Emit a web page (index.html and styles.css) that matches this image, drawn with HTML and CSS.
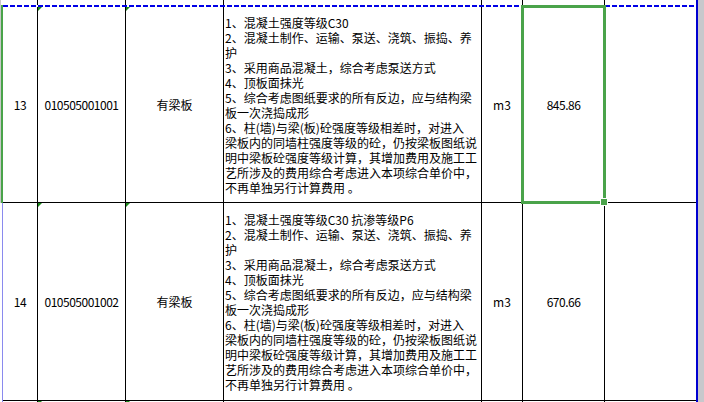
FILE: index.html
```html
<!DOCTYPE html>
<html lang="zh-CN">
<head>
<meta charset="utf-8">
<title>清单</title>
<link rel="stylesheet" href="styles.css">
</head>
<body>
<div class="sheet">
  <div class="gutter">
    <div class="gutter-top"></div>
    <div class="gutter-sel"></div>
    <div class="gutter-rest"></div>
  </div>
  <div class="grid">
    <div class="cell"></div><div class="cell"></div><div class="cell"></div><div class="cell"></div><div class="cell"></div><div class="cell"></div><div class="cell"></div>

    <div class="cell c num">13</div>
    <div class="cell c mark num">010505001001</div>
    <div class="cell c mark">有梁板</div>
    <div class="cell desc">1、混凝土强度等级C30<br>2、混凝土制作、运输、泵送、浇筑、振捣、养<br>护<br>3、采用商品混凝土，综合考虑泵送方式<br>4、顶板面抹光<br>5、综合考虑图纸要求的所有反边，应与结构梁<br>板一次浇捣成形<br>6、柱(墙)与梁(板)砼强度等级相差时，对进入<br>梁板内的同墙柱强度等级的砼，仍按梁板图纸说<br>明中梁板砼强度等级计算，其增加费用及施工工<br>艺所涉及的费用综合考虑进入本项综合单价中，<br>不再单独另行计算费用 。</div>
    <div class="cell c">m3</div>
    <div class="cell c num">845.86</div>
    <div class="cell"></div>

    <div class="cell c num">14</div>
    <div class="cell c mark num">010505001002</div>
    <div class="cell c mark">有梁板</div>
    <div class="cell desc">1、混凝土强度等级C30 抗渗等级P6<br>2、混凝土制作、运输、泵送、浇筑、振捣、养<br>护<br>3、采用商品混凝土，综合考虑泵送方式<br>4、顶板面抹光<br>5、综合考虑图纸要求的所有反边，应与结构梁<br>板一次浇捣成形<br>6、柱(墙)与梁(板)砼强度等级相差时，对进入<br>梁板内的同墙柱强度等级的砼，仍按梁板图纸说<br>明中梁板砼强度等级计算，其增加费用及施工工<br>艺所涉及的费用综合考虑进入本项综合单价中，<br>不再单独另行计算费用 。</div>
    <div class="cell c">m3</div>
    <div class="cell c num">670.66</div>
    <div class="cell"></div>

    <div class="cell"></div><div class="cell mark"></div><div class="cell mark"></div><div class="cell"></div><div class="cell"></div><div class="cell"></div><div class="cell"></div>

    <div class="marquee"></div>
    <div class="selection"></div>
    <div class="handle"></div>
  </div>
  <div class="bar"></div>
  <div class="scroll"></div>
</div>
</body>
</html>
```

FILE: styles.css
```css
html, body {
  margin: 0;
  padding: 0;
  background: #fff;
}
body {
  font-family: "Noto Sans CJK SC", "Noto Sans", sans-serif;
  font-size: 12px;
  color: #000;
}
.sheet {
  display: flex;
  width: 704px;
  height: 402px;
  overflow: hidden;
}
.gutter {
  width: 3px;
  display: flex;
  flex-direction: column;
}
.gutter-top {
  height: 5px;
  border-left: 1px solid #c8c8c8;
}
.gutter-sel {
  height: 198px;
  border-left: 1px solid #c8c8c8;
  background: #4aa34a;
}
.gutter-rest {
  flex: 1;
  border-right: 1px solid #8a8aee;
}
.grid {
  position: relative;
  width: 693px;
  display: grid;
  grid-template-columns: 34px 87px 97px 257px 40px 81px 91px;
  grid-template-rows: 6px 195px 197px 1px;
  gap: 1px;
  background: #000;
}
.cell {
  position: relative;
  background: #fff;
  overflow: hidden;
}
.c {
  display: flex;
  align-items: center;
  justify-content: center;
  white-space: nowrap;
}
.num {
  letter-spacing: -0.5px;
}
.desc {
  display: flex;
  align-items: center;
  padding-left: 1px;
  line-height: 15px;
  white-space: nowrap;
}
.mark::before {
  content: "";
  position: absolute;
  left: 0;
  top: 0;
  border-top: 4px solid #1a8a1a;
  border-right: 4px solid transparent;
}
.marquee {
  position: absolute;
  left: 0;
  right: 0;
  top: 5px;
  height: 2px;
  background: repeating-linear-gradient(90deg, #0000e6 0 5px, #fff 5px 7px);
}
.selection {
  position: absolute;
  left: 518px;
  top: 5px;
  width: 85px;
  height: 199px;
  box-sizing: border-box;
  border: 3px solid #4aa34a;
}
.handle {
  position: absolute;
  left: 597px;
  top: 198px;
  width: 6px;
  height: 6px;
  background: #4aa34a;
  border: 1px solid #fff;
}
.bar {
  width: 2px;
  background: #0000d0;
}
.scroll {
  width: 6px;
  background: #c8c8cc;
}
```
